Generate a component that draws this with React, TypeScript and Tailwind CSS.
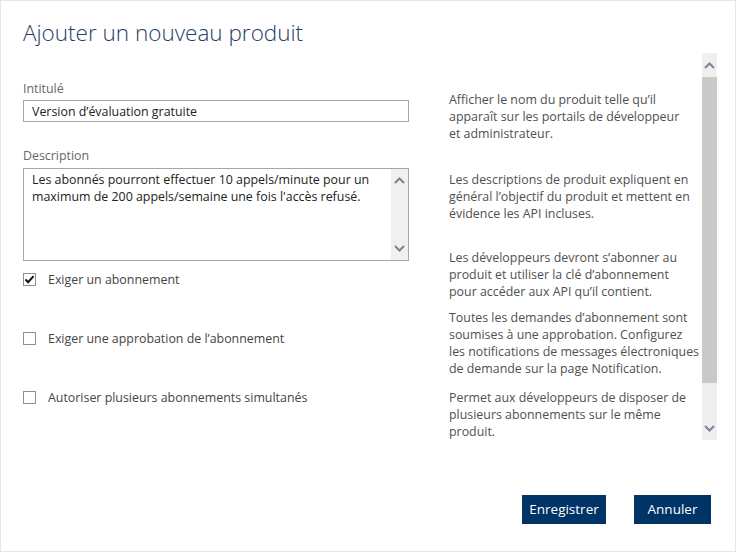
import React from 'react';

const Chevron = ({ up }: { up?: boolean }) => (
    <svg width="11" height="7" viewBox="0 0 11 7" className="block">
        <path d={up ? 'M1 6 L5.5 1.5 L10 6' : 'M1 1 L5.5 5.5 L10 1'} fill="none" stroke="#7d8396" strokeWidth="2" />
    </svg>
);

const Checkbox = ({ checked }: { checked?: boolean }) => (
    <span className="w-[13px] h-[13px] border border-[#8f8f8f] bg-white flex items-center justify-center">
        {checked && (
            <svg width="11" height="9" viewBox="0 0 11 9">
                <path d="M1.5 4.5 L4.2 7.2 L9.5 1.2" fill="none" stroke="#111" strokeWidth="2" />
            </svg>
        )}
    </span>
);

const helpTexts = [
    { top: 'mt-[38px]', lines: ["Afficher le nom du produit telle qu\u2019il", 'apparaît sur les portails de développeur', 'et administrateur.'] },
    { top: 'mt-[29px]', lines: ['Les descriptions de produit expliquent en', 'général l\u2019objectif du produit et mettent en', 'évidence les API incluses.'] },
    { top: 'mt-[27px]', lines: ['Les développeurs devront s\u2019abonner au', 'produit et utiliser la clé d\u2019abonnement', 'pour accéder aux API qu\u2019il contient.'] },
    { top: 'mt-[9px]', lines: ['Toutes les demandes d\u2019abonnement sont', 'soumises à une approbation. Configurez', 'les notifications de messages électroniques', 'de demande sur la page Notification.'] },
    { top: 'mt-[12px]', lines: ['Permet aux développeurs de disposer de', 'plusieurs abonnements sur le même', 'produit.'] },
];

const options = [
    { label: 'Exiger un abonnement', checked: true, mt: 'mt-[10px]' },
    { label: 'Exiger une approbation de l\u2019abonnement', checked: false, mt: 'mt-[42px]' },
    { label: 'Autoriser plusieurs abonnements simultanés', checked: false, mt: 'mt-[42px]' },
];

export default function App() {
    return (
        <div className="w-[736px] h-[552px] border border-[#e6e6e6] bg-white flex flex-col font-['Segoe_UI','Open_Sans',sans-serif] text-[12.4px] leading-[17px]">
            <h1 className="pl-[22px] pt-[16px] h-[52px] text-[22.5px] leading-[32px] font-light text-[#1f3e66]">Ajouter un nouveau produit</h1>

            <div className="flex h-[387px]">
                {/* formulaire */}
                <div className="w-[386px] ml-[22px] flex flex-col">
                    <label className="mt-[27px] text-[#666]">Intitulé</label>
                    <div className="mt-[3px] h-[22px] border border-[#a6a6a6] px-[8px] flex items-center text-[#222]">
                        Version d’évaluation gratuite
                    </div>

                    <label className="mt-[25px] text-[#666]">Description</label>
                    <div className="mt-[4px] h-[93px] border border-[#a6a6a6] flex">
                        <p className="flex-1 px-[8px] pt-[2px] text-[#222] whitespace-nowrap">
                            Les abonnés pourront effectuer 10 appels/minute pour un
                            <br />
                            maximum de 200 appels/semaine une fois l'accès refusé.
                        </p>
                        <div className="w-[17px] bg-[#f0f0f0] flex flex-col items-center justify-between py-[8px]">
                            <Chevron up />
                            <Chevron />
                        </div>
                    </div>

                    {options.map((o) => (
                        <div key={o.label} className={`${o.mt} flex items-center gap-[12px] text-[#444]`}>
                            <Checkbox checked={o.checked} />
                            <span>{o.label}</span>
                        </div>
                    ))}
                </div>

                {/* aide */}
                <div className="ml-[40px] w-[253px] flex flex-col text-[#505050]">
                    {helpTexts.map((h, i) => (
                        <p key={i} className={`${h.top} whitespace-nowrap`}>
                            {h.lines.map((l) => (
                                <span key={l} className="block">{l}</span>
                            ))}
                        </p>
                    ))}
                </div>

                {/* barre de défilement */}
                <div className="w-[15px] h-[387px] bg-[#efefef] flex flex-col items-center">
                    <div className="h-[24px] flex items-center"><Chevron up /></div>
                    <div className="w-full h-[306px] bg-[#c9c9c9]" />
                    <div className="flex-1 flex flex-col justify-end pb-[8px]"><Chevron /></div>
                </div>
            </div>

            <div className="flex justify-end gap-[28px] pr-[24px] mt-[55px]">
                <button className="w-[84px] h-[29px] bg-[#003366] text-white text-[13.5px]">Enregistrer</button>
                <button className="w-[77px] h-[29px] bg-[#003366] text-white text-[13.5px]">Annuler</button>
            </div>
        </div>
    );
}
